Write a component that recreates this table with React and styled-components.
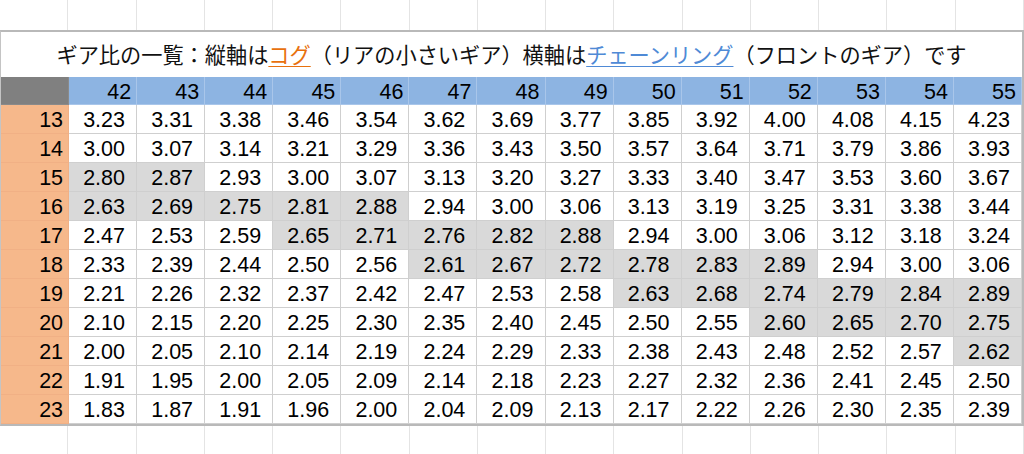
import React from 'react';
import styled, {createGlobalStyle} from 'styled-components';

const GlobalStyle = createGlobalStyle`
  html, body {
    margin: 0;
    padding: 0;
    background: #ffffff;
  }
  body {
    width: 1024px;
    height: 454px;
    overflow: hidden;
  }
`

const fronts = [42, 43, 44, 45, 46, 47, 48, 49, 50, 51, 52, 53, 54, 55];
const cogs = [13, 14, 15, 16, 17, 18, 19, 20, 21, 22, 23];

const Sheet = styled.div`
  width: 1024px;
  height: 454px;
  display: flex;
  flex-direction: column;
  font-family: "Liberation Sans", Arial, sans-serif;
  color: #000;
`

const BlankRow = styled.div`
  display: grid;
  grid-template-columns: repeat(15, 1fr);
  height: ${props => props.h}px;
  flex-shrink: 0;
`

const BlankCell = styled.div`
  border-right: 1px solid #e4e4e4;
`

const Table = styled.div`
  border-top: 2px solid #b9b9b9;
  border-bottom: 2px solid #b9b9b9;
  border-left: 1px solid #c4c4c4;
  border-right: 2px solid #b9b9b9;
  flex-shrink: 0;
`

const Title = styled.div`
  height: 45px;
  display: flex;
  align-items: center;
  justify-content: center;
  font-family: "Noto Sans CJK JP", "Noto Sans", sans-serif;
  font-size: 21.2px;
  color: #111;
  white-space: nowrap;
  padding-bottom: 3px;
  box-sizing: border-box;
`

const Link = styled.span`
  color: ${props => props.color};
  text-decoration: underline;
  text-underline-offset: 3px;
  text-decoration-thickness: 1px;
`

const Grid = styled.div`
  display: grid;
  grid-template-columns: repeat(15, 1fr);
  grid-template-rows: 28px repeat(11, 29px);
`

const Cell = styled.div`
  display: flex;
  align-items: center;
  justify-content: ${props => props.align === 'right' ? 'flex-end' : 'center'};
  padding: ${props => props.align === 'right' ? '4px 5px 0 0' : '4px 0 0 3px'};
  font-size: 21.5px;
  line-height: 1;
  background: ${props => props.bg || '#ffffff'};
  border-right: 1px solid ${props => props.line || '#cfcfcf'};
  border-bottom: 1px solid ${props => props.line || '#cfcfcf'};
`

const Corner = styled(Cell)`
  background: #808080;
  border-right: 1px solid #8a8a8a;
  border-bottom: 1px solid #8a8a8a;
`

const shade = (text) => {
    const v = parseFloat(text);
    return v >= 2.6 && v < 2.9;
};

export default function App() {
    return (
        <Sheet>
            <GlobalStyle/>
            <BlankRow h={30}>
                {Array.from({length: 15}).map((_, i) => <BlankCell key={i}/>)}
            </BlankRow>
            <Table>
                <Title>
                    ギア比の一覧：縦軸は<Link color="#e8710e">コグ</Link>（リアの小さいギア）横軸は<Link color="#4f8ad6">チェーンリング</Link>（フロントのギア）です
                </Title>
                <Grid>
                    <Corner/>
                    {fronts.map(f => (
                        <Cell key={f} align="right" bg="#8db4e2" line="#a9c6ea">{f}</Cell>
                    ))}
                    {cogs.map(c => (
                        <React.Fragment key={c}>
                            <Cell align="right" bg="#f6b88b" line="#f1b085">{c}</Cell>
                            {fronts.map(f => {
                                const text = (f / c).toFixed(2);
                                return (
                                    <Cell key={f} bg={shade(text) ? '#d9d9d9' : undefined}>
                                        {text}
                                    </Cell>
                                );
                            })}
                        </React.Fragment>
                    ))}
                </Grid>
            </Table>
            <BlankRow h={30}>
                {Array.from({length: 15}).map((_, i) => <BlankCell key={i}/>)}
            </BlankRow>
        </Sheet>
    );
}
